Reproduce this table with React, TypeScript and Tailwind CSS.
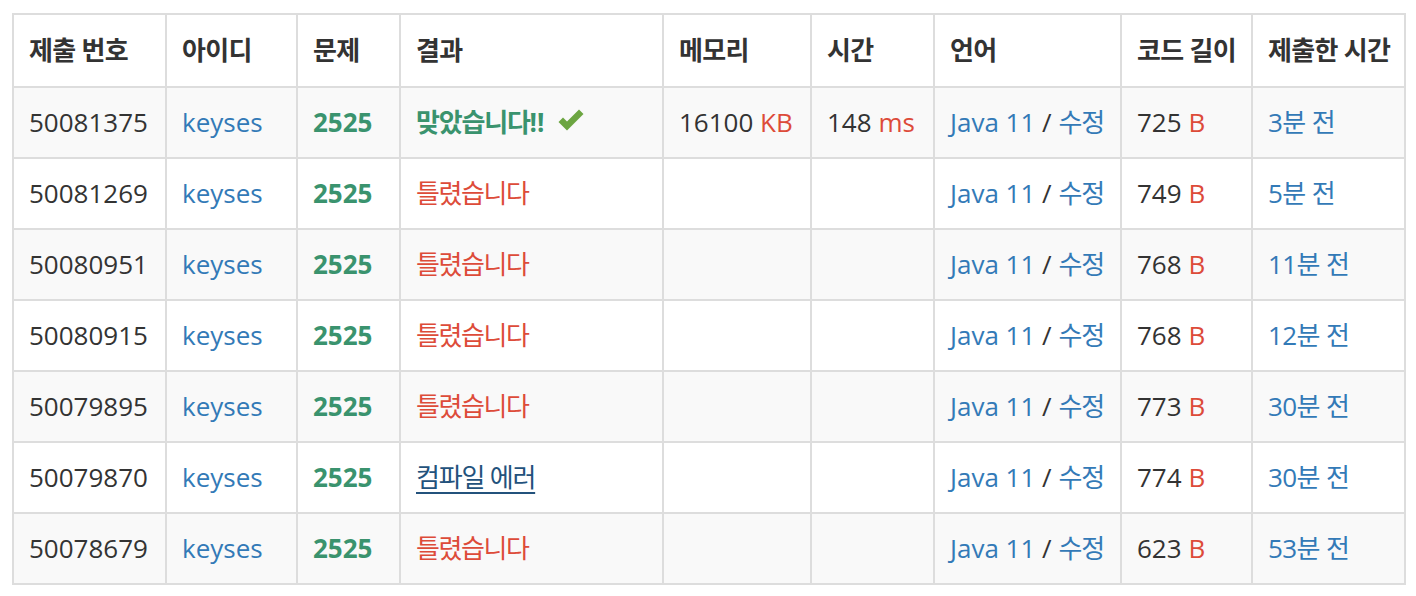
import React from 'react'

type Row = {
  id: string
  result: 'ac' | 'wa' | 'ce'
  memory?: string
  time?: string
  length: string
  ago: string
}

const rows: Row[] = [
  { id: '50081375', result: 'ac', memory: '16100', time: '148', length: '725', ago: '3분 전' },
  { id: '50081269', result: 'wa', length: '749', ago: '5분 전' },
  { id: '50080951', result: 'wa', length: '768', ago: '11분 전' },
  { id: '50080915', result: 'wa', length: '768', ago: '12분 전' },
  { id: '50079895', result: 'wa', length: '773', ago: '30분 전' },
  { id: '50079870', result: 'ce', length: '774', ago: '30분 전' },
  { id: '50078679', result: 'wa', length: '623', ago: '53분 전' },
]

const headers = ['제출 번호', '아이디', '문제', '결과', '메모리', '시간', '언어', '코드 길이', '제출한 시간']
const widths = [153, 131, 103, 263, 148, 123, 187, 131, 153]

// glyphicon-ok style check
function CheckIcon() {
  return (
    <svg viewBox="0 0 26 24" className="inline-block w-[26px] h-[24px] ml-[13px] align-[-1px]">
      <path d="M0.5 13 L5 8.5 L9 12.5 L21 0.5 L25.5 5 L9 21.5 Z" fill="#6ca541" />
    </svg>
  )
}

function Result({ r }: { r: Row['result'] }) {
  if (r === 'ac')
    return (
      <span className="font-bold text-[#3a936e]">
        <span className="tracking-[-1.2px]">맞았습니다</span>!!
        <CheckIcon />
      </span>
    )
  if (r === 'ce')
    return (
      <span className="text-[#23527c] tracking-[-1.2px] underline underline-offset-[5px] decoration-2">컴파일 에러</span>
    )
  return <span className="text-[#dd4b39] tracking-[-1.4px]">틀렸습니다</span>
}

export default function App() {
  return (
    <div className="bg-white w-[1416px] h-[596px] pt-[13px] pl-[12px]" style={{ fontFamily: '"Open Sans", "Noto Sans CJK KR", sans-serif' }}>
      <table className="table-fixed border-collapse border-2 border-[#ddd] text-[26px] text-[#333] w-[1394px]">
        <colgroup>
          {widths.map((w, i) => (
            <col key={i} style={{ width: w }} />
          ))}
        </colgroup>
        <thead>
          <tr className="h-[73px]">
            {headers.map(h => (
              <th key={h} className="border-2 border-[#ddd] px-[15px] text-left font-bold whitespace-nowrap tracking-[-0.7px]">
                {h}
              </th>
            ))}
          </tr>
        </thead>
        <tbody>
          {rows.map((row, i) => (
            <tr key={row.id} className={`h-[71px] ${i % 2 === 0 ? 'bg-[#f9f9f9]' : 'bg-white'}`}>
              <td className="border-2 border-[#ddd] px-[15px] whitespace-nowrap">{row.id}</td>
              <td className="border-2 border-[#ddd] px-[15px] whitespace-nowrap text-[#337ab7]">keyses</td>
              <td className="border-2 border-[#ddd] px-[15px] whitespace-nowrap font-bold text-[#3a936e]">2525</td>
              <td className="border-2 border-[#ddd] px-[15px] whitespace-nowrap">
                <Result r={row.result} />
              </td>
              <td className="border-2 border-[#ddd] px-[15px] whitespace-nowrap">
                {row.memory && (
                  <>
                    {row.memory} <span className="text-[#dd4b39]">KB</span>
                  </>
                )}
              </td>
              <td className="border-2 border-[#ddd] px-[15px] whitespace-nowrap">
                {row.time && (
                  <>
                    {row.time} <span className="text-[#dd4b39]">ms</span>
                  </>
                )}
              </td>
              <td className="border-2 border-[#ddd] px-[15px] whitespace-nowrap">
                <span className="text-[#337ab7]">Java 11</span> / <span className="text-[#337ab7] tracking-[-1px]">수정</span>
              </td>
              <td className="border-2 border-[#ddd] px-[15px] whitespace-nowrap">
                {row.length} <span className="text-[#dd4b39]">B</span>
              </td>
              <td className="border-2 border-[#ddd] px-[15px] whitespace-nowrap text-[#337ab7] tracking-[-0.6px]">{row.ago}</td>
            </tr>
          ))}
        </tbody>
      </table>
    </div>
  )
}
